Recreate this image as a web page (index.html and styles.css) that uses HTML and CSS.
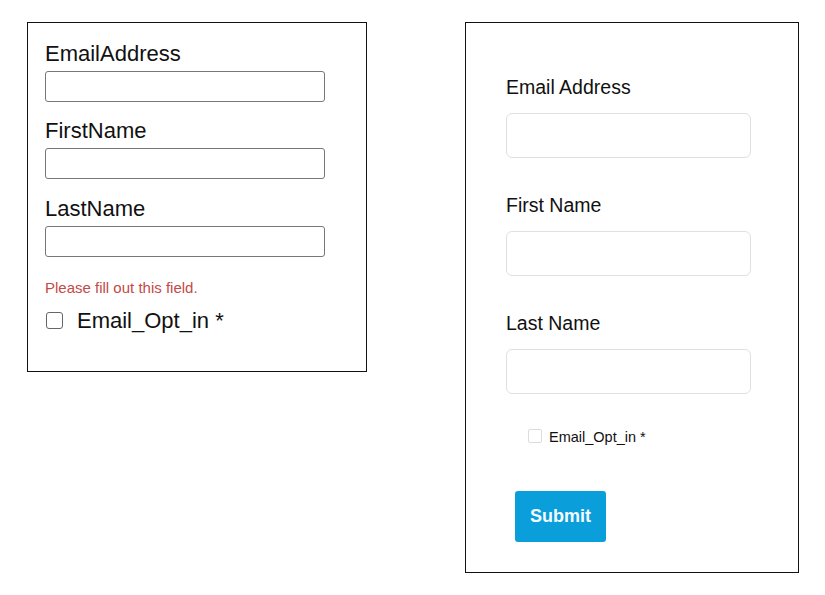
FILE: index.html
```html
<!DOCTYPE html>
<html lang="en">

<head>
  <meta charset="UTF-8">
  <title>Email Opt-in Form</title>
  <link rel="stylesheet" href="styles.css">
</head>

<body>
  <div class="page">
    <!-- before: plain browser form -->
    <form class="panel panel-plain">
      <label class="plain-label" for="p_email">EmailAddress</label>
      <input class="plain-input" type="email" id="p_email">

      <label class="plain-label" for="p_first">FirstName</label>
      <input class="plain-input" type="text" id="p_first">

      <label class="plain-label" for="p_last">LastName</label>
      <input class="plain-input" type="text" id="p_last">

      <div class="plain-error">Please fill out this field.</div>
      <div class="plain-check">
        <input type="checkbox" id="p_optin">
        <label for="p_optin">Email_Opt_in *</label>
      </div>
    </form>

    <!-- after: styled form -->
    <form class="panel panel-styled">
      <label class="styled-label" for="s_email">Email Address</label>
      <input class="styled-input" type="email" id="s_email">

      <label class="styled-label" for="s_first">First Name</label>
      <input class="styled-input" type="text" id="s_first">

      <label class="styled-label" for="s_last">Last Name</label>
      <input class="styled-input" type="text" id="s_last">

      <div class="styled-check">
        <input type="checkbox" id="s_optin">
        <label for="s_optin">Email_Opt_in *</label>
      </div>
      <button type="button" class="submit-btn">Submit</button>
    </form>
  </div>
</body>

</html>
```

FILE: styles.css
```css
body {
  margin: 0;
  background: #fff;
  font-family: 'Liberation Sans', Arial, sans-serif;
  color: #111;
}

.page {
  display: flex;
  align-items: flex-start;
  gap: 98px;
  padding: 22px 0 0 27px;
}

.panel {
  box-sizing: border-box;
  border: 1px solid #111;
  display: flex;
  flex-direction: column;
  align-items: flex-start;
  margin: 0;
}

/* Left form */
.panel-plain {
  width: 340px;
  height: 350px;
  padding: 17.5px 0 0 17px;
}

.plain-label {
  font-size: 22px;
  line-height: 25px;
  margin-bottom: 5px;
}

.plain-input {
  box-sizing: border-box;
  width: 280px;
  height: 31px;
  border: 1px solid #777;
  border-radius: 3px;
  margin: 0 0 16.5px 0;
  padding: 0 6px;
}

.plain-input:last-of-type {
  margin-bottom: 22px;
}

.plain-error {
  font-size: 15px;
  line-height: 17px;
  color: #c24a48;
  margin-bottom: 12px;
}

.plain-check {
  display: flex;
  align-items: center;
  gap: 14px;
  font-size: 22px;
  line-height: 25px;
}

.plain-check input {
  appearance: none;
  box-sizing: border-box;
  width: 17px;
  height: 17px;
  margin: 0 0 0 1px;
  border: 1.5px solid #666;
  border-radius: 3px;
  background: #fff;
}

/* Right form */
.panel-styled {
  width: 334px;
  height: 551px;
  padding: 53px 0 0 40px;
}

.styled-label {
  font-size: 19.5px;
  line-height: 22px;
  margin-bottom: 15px;
}

.styled-input {
  box-sizing: border-box;
  width: 245px;
  height: 45px;
  border: 1px solid #e0e0e0;
  border-radius: 6px;
  margin: 0 0 36px 0;
  padding: 0 10px;
}

.styled-input:last-of-type {
  margin-bottom: 35px;
}

.styled-check {
  display: flex;
  align-items: center;
  gap: 7px;
  margin-left: 22px;
  font-size: 14.5px;
  line-height: 17px;
}

.styled-check input {
  appearance: none;
  box-sizing: border-box;
  width: 14px;
  height: 14px;
  margin: -3px 0 0 0;
  border: 1px solid #dcdcdc;
  border-radius: 2px;
  background: #fff;
}

.submit-btn {
  margin: 45px 0 0 9px;
  width: 91px;
  height: 51px;
  border: none;
  border-radius: 3px;
  background: #0a9edb;
  color: #f4fbff;
  font-family: 'Liberation Sans', Arial, sans-serif;
  font-size: 18px;
  font-weight: 700;
  cursor: pointer;
}
```
